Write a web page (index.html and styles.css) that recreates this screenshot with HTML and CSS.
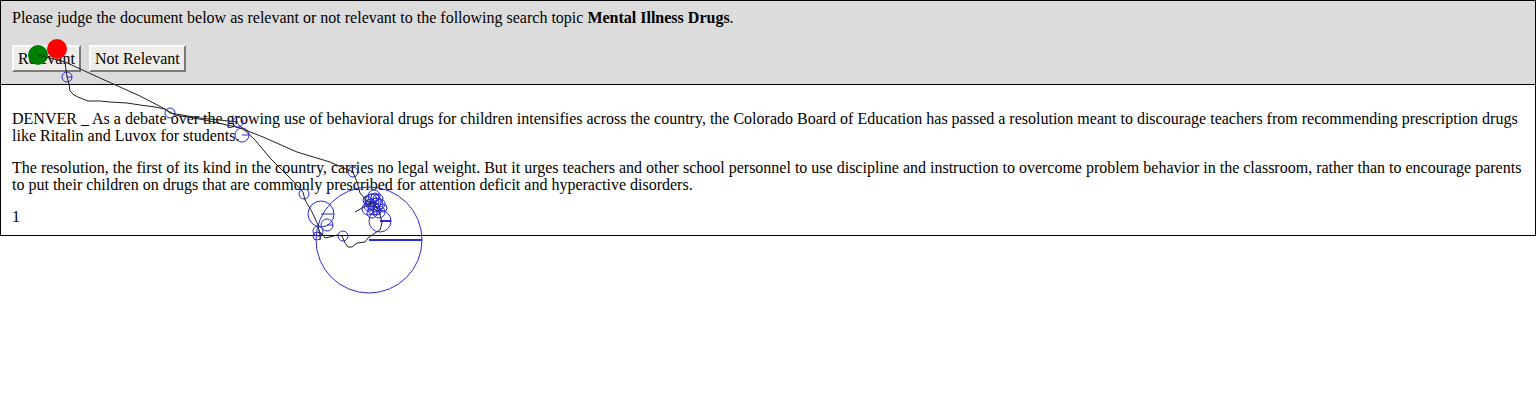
FILE: index.html
```html
<!DOCTYPE html>
<html>
<head>
<meta charset="utf-8">
<link rel="stylesheet" href="styles.css">
</head>
<body>
<div class="page">
  <div class="judge">
    <div class="prompt">Please judge the document below as relevant or not relevant to the following search topic <b>Mental Illness Drugs</b>.</div>
    <div class="buttons">
      <button class="btn">Relevant</button>
      <button class="btn">Not Relevant</button>
    </div>
  </div>
  <div class="doc">
    <p class="para">DENVER _ As a debate over the growing use of behavioral drugs for children intensifies across the country, the Colorado Board of Education has passed a resolution meant to discourage teachers from recommending prescription drugs like Ritalin and Luvox for students.</p>
    <p class="para">The resolution, the first of its kind in the country, carries no legal weight. But it urges teachers and other school personnel to use discipline and instruction to overcome problem behavior in the classroom, rather than to encourage parents to put their children on drugs that are commonly prescribed for attention deficit and hyperactive disorders.</p>
    <div class="pagenum">1</div>
  </div>

  <svg class="trace" width="1536" height="400" viewBox="0 0 1536 400" xmlns="http://www.w3.org/2000/svg">
    <g class="fix" fill="none" stroke="#2a2ad6" stroke-width="1">
      <circle cx="67" cy="77" r="5"/>
      <line x1="67" y1="77" x2="72" y2="77"/>
      <circle cx="170" cy="113" r="5"/>
      <circle cx="238" cy="122" r="5"/>
      <circle cx="242" cy="135" r="7"/>
      <line x1="242" y1="135" x2="249" y2="135"/>
      <circle cx="353" cy="172" r="5"/>
      <circle cx="304" cy="194" r="5"/>
      <circle cx="321" cy="214" r="13"/>
      <line x1="321" y1="214" x2="334" y2="214"/>
      <circle cx="327" cy="225" r="6"/>
      <line x1="327" y1="225" x2="333" y2="225"/>
      <circle cx="318" cy="231" r="5"/>
      <circle cx="317" cy="236" r="4"/>
      <circle cx="343" cy="236" r="5"/>
      <circle cx="369" cy="240" r="53"/>
      <line x1="369" y1="240" x2="422" y2="240" stroke-width="2"/>
      <circle cx="380" cy="221" r="11"/>
      <line x1="380" y1="221" x2="391" y2="221" stroke-width="2"/>
      <circle cx="373" cy="202" r="8"/>
      <circle cx="371" cy="200" r="6"/>
      <circle cx="376" cy="205" r="7"/>
      <circle cx="369" cy="206" r="5"/>
      <circle cx="378" cy="199" r="5"/>
      <circle cx="374" cy="209" r="6"/>
      <circle cx="370" cy="203" r="4"/>
      <circle cx="375" cy="197" r="4"/>
      <circle cx="380" cy="204" r="5"/>
      <circle cx="367" cy="200" r="4"/>
      <circle cx="372" cy="213" r="5"/>
      <circle cx="377" cy="211" r="4"/>
      <circle cx="373" cy="204" r="3"/>
      <circle cx="376" cy="201" r="3"/>
      <circle cx="383" cy="208" r="4"/>
      <circle cx="374" cy="196" r="6"/>
      <circle cx="368" cy="209" r="6"/>
      <circle cx="379" cy="212" r="6"/>
      <circle cx="372" cy="205" r="2"/>
      <circle cx="377" cy="206" r="2"/>
    </g>
    <g class="path" fill="none" stroke="#222" stroke-width="1">
      <polyline points="65,62 66,70 67,77 69,84 70,91 74,95 78,97 88,101 100,101 110,102 127,103 140,105 155,107 165,109 170,113 200,118 238,122"/>
      <polyline points="65,62 100,78 140,96 163,108 175,115 205,120 240,128 263,137 297,152 330,162 353,172 357,182 360,193 366,200 372,203"/>
      <polyline points="238,124 255,140 270,158 290,178 303,192 305,200 312,212 318,225 320,235 320,240"/>
      <polyline points="355,212 364,207 372,203 376,206 380,214 382,223 380,230 375,233 368,238 365,242 357,243 352,247 348,247 345,243 342,236 337,235 330,237 325,238 323,235 318,230"/>
    </g>
    <circle cx="57" cy="49" r="10" fill="#ff0000"/>
    <circle cx="38" cy="55" r="10" fill="#008000"/>
    <line x1="38" y1="55" x2="65" y2="62" stroke="#222" stroke-width="1"/>
  </svg>
</div>
</body>
</html>
```

FILE: styles.css
```css
html, body {
  margin: 0;
  padding: 0;
  background: #fff;
  min-height: 400px;
}

.page {
  position: relative;
  min-height: 400px;
  font-family: "Liberation Serif", "Times New Roman", serif;
  font-size: 16px;
  line-height: 17px;
  color: #000;
}

.judge {
  border: 1px solid #000;
  background: #dcdcdc;
  padding: 8px 10px 12px 11px;
  display: flex;
  flex-direction: column;
}

.prompt {
  line-height: 17px;
}

.buttons {
  display: flex;
  gap: 8px;
  margin-top: 19px;
}

.btn {
  font-family: "Liberation Serif", "Times New Roman", serif;
  font-size: 16px;
  height: 27px;
  padding: 0 4px;
  background: #efedea;
  color: #000;
  border: 2px solid;
  border-color: #fafafa #7a7a7a #7a7a7a #fafafa;
  border-radius: 0;
  margin: 0;
}

.doc {
  border: 1px solid #000;
  border-top: none;
  padding: 10px 10px 10px 11px;
}

.para {
  margin: 15px 0 0 0;
}

.pagenum {
  margin-top: 15px;
}

.trace {
  position: absolute;
  left: 0;
  top: 0;
  pointer-events: none;
}
```
